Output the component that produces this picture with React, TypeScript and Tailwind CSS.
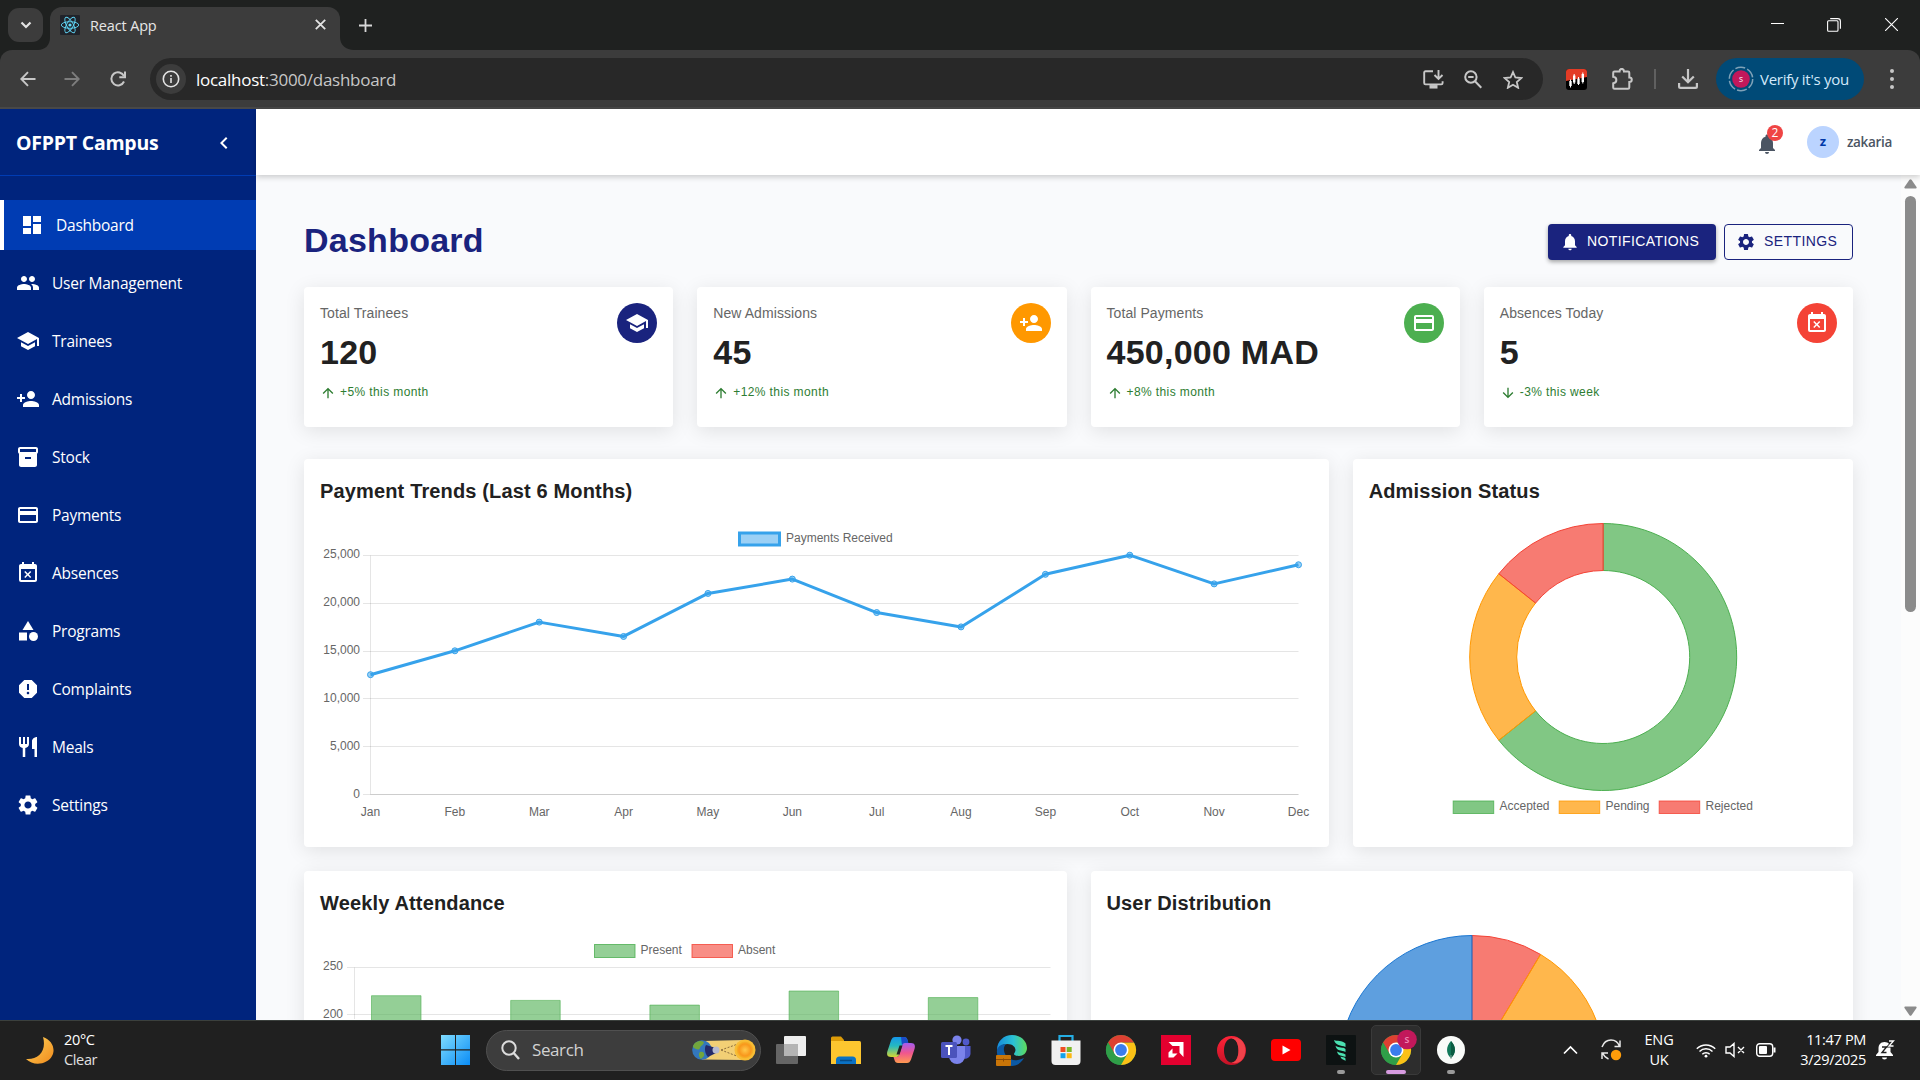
import React from "react";
import {
  MdDashboard, MdPeople, MdSchool, MdPersonAdd, MdInventory2, MdPayment, MdEventBusy, MdCategory,
  MdReport, MdRestaurant, MdSettings, MdNotifications, MdChevronLeft, MdArrowUpward, MdArrowDownward,
} from "react-icons/md";

const ARIAL = "font-['Liberation_Sans',Arial,sans-serif]";

/* ---------- Browser frame ---------- */

function ReactLogo() {
  return (
    <svg width="20" height="20" viewBox="0 0 20 20" className="block">
      <rect width="20" height="20" rx="1" fill="#20232a" />
      <g fill="none" stroke="#61dafb" strokeWidth="0.9">
        <ellipse cx="10" cy="10" rx="8.7" ry="3.3" />
        <ellipse cx="10" cy="10" rx="8.7" ry="3.3" transform="rotate(60 10 10)" />
        <ellipse cx="10" cy="10" rx="8.7" ry="3.3" transform="rotate(120 10 10)" />
      </g>
      <circle cx="10" cy="10" r="1.6" fill="#61dafb" />
    </svg>
  );
}

function TabStrip() {
  return (
    <div className="flex h-[50px] items-start bg-[#1f2120]">
      <div className="ml-[8px] mt-[8px] flex h-[34px] w-[35px] items-center justify-center rounded-[11px] bg-[#3c3c3c]">
        <svg width="12" height="8" viewBox="0 0 12 8" fill="none" stroke="#e3e3e3" strokeWidth="2.2"><path d="M1.5 1.5 6 6l4.500-4.500" /></svg>
      </div>
      <svg width="12" height="50" viewBox="0 0 12 50" className="ml-[-5px]"><path d="M12 38v12H0c7 0 12-5 12-12z" fill="#3c3c3c" /></svg>
      <div className="mt-[7px] flex h-[43px] w-[290px] items-center rounded-t-[12px] bg-[#3c3c3c] pb-[8px]">
        <div className="ml-[10px]"><ReactLogo /></div>
        <span className="ml-[10px] flex-1 pt-[2px] text-[14.500px] tracking-[-0.15px] text-[#e6e6e6]">React App</span>
        <svg width="11" height="11" viewBox="0 0 11 11" className="mr-[14.500px]" stroke="#e3e3e3" strokeWidth="1.8"><path d="M.8.8l9.400 9.400M10.200.8.8 10.200" /></svg>
      </div>
      <svg width="14" height="50" viewBox="0 0 14 50"><path d="M0 37v13h14C6 50 0 45 0 37z" fill="#3c3c3c" /></svg>
      <svg width="13" height="13" viewBox="0 0 13 13" className="ml-[5px] mt-[18.500px]" stroke="#d8d8d8" strokeWidth="1.8"><path d="M6.500 0v13M0 6.500h13" /></svg>
      <div className="flex-1" />
      <svg width="13" height="13" viewBox="0 0 13 13" className="mt-[18px]" stroke="#fff" shapeRendering="crispEdges"><path d="M0 5.500h13" /></svg>
      <svg width="14" height="14" viewBox="0 0 14 14" className="ml-[43px] mt-[18px]" fill="none" stroke="#fff" strokeWidth="1.100">
        <rect x=".6" y="2.800" width="10.400" height="10.400" rx="1" /><path d="M3.200.6h7.500c1.500 0 2.700 1.200 2.700 2.700v7.500" />
      </svg>
      <svg width="13" height="13" viewBox="0 0 13 13" className="ml-[44px] mr-[22px] mt-[18px]" stroke="#fff" strokeWidth="1.100"><path d="M0 0l13 13M13 0 0 13" /></svg>
    </div>
  );
}

function ArrowIcon({ color, flip }: { color: string; flip?: boolean }) {
  return (
    <svg width="16" height="16" viewBox="0 0 16 16" fill="none" stroke={color} strokeWidth="1.900" className={flip ? "rotate-180" : ""}>
      <path d="M15.500 8H1.500M8 1.200 1.300 8 8 14.800" />
    </svg>
  );
}

function Toolbar() {
  return (
    <div className="h-[59px] bg-[#1f2120]">
      <div className="flex h-[59px] items-start rounded-t-[12px] border-b-2 border-[#484848] bg-[#3c3c3c] pt-[8px]">
        <div className="flex h-[42px] w-[150px] items-center pl-[20px]">
          <ArrowIcon color="#c7c7c7" />
          <div className="ml-[28px]"><ArrowIcon color="#7d7d7d" flip /></div>
          <svg width="16" height="16" viewBox="0 0 16 16" className="ml-[29.500px]" fill="none" stroke="#c7c7c7" strokeWidth="2">
            <path d="M14 10.500A6.600 6.600 0 1 1 14 5.200" /><path d="M15 .5v5.800H9.300" />
          </svg>
        </div>
        <div className="flex h-[42px] w-[1393px] items-center rounded-full bg-[#282828] pl-[6px]">
          <div className="flex h-[30px] w-[30px] items-center justify-center rounded-full bg-[#3c3c3c]">
            <svg width="18" height="18" viewBox="0 0 18 18" fill="none" stroke="#e3e3e3" strokeWidth="1.600">
              <circle cx="9" cy="9" r="7.700" /><path d="M9 8v5M9 5v1.700" />
            </svg>
          </div>
          <span className="ml-[10px] flex-1 pt-[1px] text-[17px] tracking-[-0.270px] text-[#c7c7c7]"><span className="text-white">localhost</span>:3000/dashboard</span>
          <svg width="21" height="19" viewBox="0 0 21 19" fill="none" stroke="#c7c7c7" strokeWidth="1.900">
            <path d="M10 1.300H2.500c-.8 0-1.300.5-1.300 1.300v10.500c0 .8.500 1.300 1.300 1.300h15.800c.8 0 1.300-.5 1.300-1.300v-1.800" /><path d="M15.500 0v8.500M11.500 5l4 4 4-4" /><path d="M6.500 16.800h8" strokeWidth="3.500" />
          </svg>
          <svg width="18" height="19" viewBox="0 0 18 19" className="ml-[20px]" fill="none" stroke="#c7c7c7" strokeWidth="2">
            <circle cx="6.900" cy="7" r="5.700" /><path d="M11 11.200l6.300 6.500M4.200 7h5.400" />
          </svg>
          <svg width="20" height="19" viewBox="0 0 24 23" className="ml-[21px] mr-[20px]" fill="none" stroke="#c7c7c7" strokeWidth="2.200">
            <path d="M12 2.500l2.900 6.600 7.100.7-5.400 4.700 1.600 7L12 17.800l-6.200 3.700 1.600-7L2 9.800l7.100-.7z" />
          </svg>
        </div>
        <div className="flex h-[42px] flex-1 items-center">
          <svg width="21" height="21" viewBox="0 0 21 21" className="ml-[23px]">
            <rect width="21" height="21" rx="3" fill="#000" /><path d="M0 12V3a3 3 0 0 1 3-3h15a3 3 0 0 1 3 3v5z" fill="#e33b25" />
            <path d="M4.500 12v5M8.200 6.500v7M12.500 9.500v5.500M16.800 5v8" stroke="#fff" strokeWidth="2.400" /><path d="M4.500 10.500v8M8.200 5v10M12.500 8v8M16.800 3.500v11" stroke="#fff" />
          </svg>
          <svg width="21" height="22" viewBox="0 0 21 22" className="ml-[25px]" fill="none" stroke="#c7c7c7" strokeWidth="2">
            <path d="M2.500 3.500H7.500C7.500 0 12 0 12 3.500h4c.8 0 1.300.5 1.300 1.300V9.500c3.300 0 3.300 4.500 0 4.500v5.500c0 .8-.5 1.300-1.300 1.300H2.500c-.8 0-1.300-.5-1.300-1.300v-4.200c4.200-.5 4.200-6 0-6.500V4.800c0-.8.5-1.300 1.300-1.300z" />
          </svg>
          <div className="ml-[21px] h-[20px] w-[2px] bg-[#606060]" />
          <svg width="20" height="20" viewBox="0 0 20 20" className="ml-[22px]" fill="none" stroke="#c7c7c7" strokeWidth="2.200">
            <path d="M10 0v13M4.200 7.500 10 13.300l5.800-5.800M1.100 14v3.500c0 .8.600 1.400 1.400 1.400h15c.8 0 1.400-.6 1.400-1.400V14" />
          </svg>
          <div className="ml-[18px] flex h-[42px] w-[148px] items-center rounded-full bg-[#004a77]">
            <svg width="26" height="26" viewBox="0 0 26 26" className="ml-[12px]">
              <circle cx="13" cy="13" r="11.700" fill="none" stroke="#7fa2b8" strokeWidth="1.500" strokeDasharray="10 2.250" />
              <circle cx="13" cy="13" r="8.800" fill="#c2185b" />
              <text x="13" y="16" fontSize="8.500" fill="#fff" textAnchor="middle" fontFamily="Open Sans, sans-serif">s</text>
            </svg>
            <span className="ml-[6px] whitespace-nowrap text-[15px] tracking-[-0.270px] text-[#d3e9fb]">Verify it's you</span>
          </div>
          <svg width="4" height="20" viewBox="0 0 4 20" className="ml-[26px]" fill="#c7c7c7"><circle cx="2" cy="2" r="2" /><circle cx="2" cy="10" r="2" /><circle cx="2" cy="18" r="2" /></svg>
        </div>
      </div>
    </div>
  );
}

/* ---------- Application ---------- */

const NAV = [
  { label: "Dashboard", Icon: MdDashboard, active: true },
  { label: "User Management", Icon: MdPeople },
  { label: "Trainees", Icon: MdSchool },
  { label: "Admissions", Icon: MdPersonAdd },
  { label: "Stock", Icon: MdInventory2 },
  { label: "Payments", Icon: MdPayment },
  { label: "Absences", Icon: MdEventBusy },
  { label: "Programs", Icon: MdCategory },
  { label: "Complaints", Icon: MdReport },
  { label: "Meals", Icon: MdRestaurant },
  { label: "Settings", Icon: MdSettings },
];

function Sidebar() {
  return (
    <aside className="flex w-[256px] shrink-0 flex-col bg-[#00247d] text-white">
      <div className="flex h-[67px] items-center justify-between border-b border-[#003cb3] pl-[16px] pr-[20px]">
        <span className="pt-[2px] text-[19.500px] font-bold tracking-[-0.230px]">OFPPT Campus</span>
        <MdChevronLeft size={24} className="mt-[2px]" />
      </div>
      <nav className="mt-[24px] flex flex-col gap-2">
        {NAV.map(({ label, Icon, active }) => (
          <div key={label} className={`flex h-[50px] items-center pl-4 ${active ? "border-l-4 border-white bg-[#003cb3]" : ""}`}>
            <Icon size={24} />
            <span className="ml-3 pt-[2px] text-[15.500px] tracking-[-0.240px]">{label}</span>
          </div>
        ))}
      </nav>
    </aside>
  );
}

function Header() {
  return (
    <header className="relative z-10 flex h-[66px] shrink-0 items-center justify-end bg-white shadow-[0_2px_6px_rgba(0,0,0,0.2)]">
      <div className="relative mr-[28px] mt-[3px]">
        <MdNotifications size={24} color="#4b5563" className="block" />
        <span className="absolute left-[12px] top-[-7px] flex h-[16px] w-[16px] items-center justify-center rounded-full bg-[#ef4444] text-[12px] leading-none text-white">2</span>
      </div>
      <div className="flex h-[32px] w-[32px] items-center justify-center rounded-full bg-[#bbd4ff] text-[13px] font-bold text-[#0038a8]">z</div>
      <span className="ml-2 mr-[28px] text-[13.500px] font-semibold tracking-[-0.320px] text-[#4b5563]">zakaria</span>
    </header>
  );
}

const STATS = [
  { label: "Total Trainees", value: "120", trend: "+5% this month", up: true, Icon: MdSchool, bg: "bg-[#1a237e]" },
  { label: "New Admissions", value: "45", trend: "+12% this month", up: true, Icon: MdPersonAdd, bg: "bg-[#ff9800]" },
  { label: "Total Payments", value: "450,000 MAD", trend: "+8% this month", up: true, Icon: MdPayment, bg: "bg-[#4caf50]" },
  { label: "Absences Today", value: "5", trend: "-3% this week", up: false, Icon: MdEventBusy, bg: "bg-[#f44336]" },
];

function StatCard({ label, value, trend, up, Icon, bg }: (typeof STATS)[number]) {
  return (
    <div className="flex h-[140px] justify-between rounded bg-white p-4 shadow-[0_4px_20px_rgba(0,0,0,0.1)]">
      <div>
        <div className="text-[14px] leading-[20px] tracking-[0.080px] text-[#666]">{label}</div>
        <div className="mt-[8px] text-[34px] font-bold leading-[42px] tracking-[0.25px] text-[#212121]">{value}</div>
        <div className="mt-[9px] flex items-center gap-1 text-[12px] leading-[20px] tracking-[0.4px] text-[#2e7d32]">
          {up ? <MdArrowUpward size={16} className="mt-[1px]" /> : <MdArrowDownward size={16} className="mt-[1px]" />}
          {trend}
        </div>
      </div>
      <div className={`flex h-10 w-10 items-center justify-center rounded-full text-white ${bg}`}><Icon size={24} /></div>
    </div>
  );
}

function Panel({ title, className, children }: { title: string; className: string; children: React.ReactNode }) {
  return (
    <section className={`rounded bg-white p-4 shadow-[0_4px_20px_rgba(0,0,0,0.1)] ${className}`}>
      <h2 className="text-[20px] font-bold leading-[32px] tracking-[0.15px] text-[#212121]">{title}</h2>
      {children}
    </section>
  );
}

const MONTHS = ["Jan", "Feb", "Mar", "Apr", "May", "Jun", "Jul", "Aug", "Sep", "Oct", "Nov", "Dec"];
const PAYMENTS = [12500, 15000, 18000, 16500, 21000, 22500, 19000, 17500, 23000, 25000, 22000, 24000];
const GRID = "rgba(0,0,0,0.1)";

function PaymentChart() {
  const left = 50.5, right = 978.5, top = 48.5, bottom = 287.500;
  const px = (i: number) => left + (i * (right - left)) / 11;
  const py = (v: number) => bottom - (v / 25000) * (bottom - top);
  return (
    <svg width="993" height="324" viewBox="0 0 993 324" fontSize="12" fill="#666" className="block">
      <rect x="419.500" y="26" width="40" height="12" fill="#9bd0f5" stroke="#36a2eb" strokeWidth="3" />
      <text x="466" y="35">Payments Received</text>
      {[0, 5000, 10000, 15000, 20000, 25000].map((v) => {
        const y = Math.round(py(v) - 0.5) + 0.5;
        return (
          <g key={v}>
            <path d={`M43 ${y}H${right}`} stroke={GRID} />
            <text x="40" y={y + (v > 10000 ? 2 : 3)} textAnchor="end">{v.toLocaleString("en-US")}</text>
          </g>
        );
      })}
      <path d={`M${left} ${top}V${bottom}M${left} ${bottom}H${right}`} stroke={GRID} />
      <polyline points={PAYMENTS.map((v, i) => `${px(i)},${py(v) - 0.3}`).join(" ")} fill="none" stroke="#36a2eb" strokeWidth="3" strokeLinejoin="round" />
      {PAYMENTS.map((v, i) => <circle key={i} cx={px(i)} cy={py(v) - 0.3} r="3" fill="#36a2eb" fillOpacity="0.5" stroke="#36a2eb" />)}
      {MONTHS.map((m, i) => <text key={m} x={px(i)} y="309" textAnchor="middle">{m}</text>)}
    </svg>
  );
}

function slice(cx: number, cy: number, r: number, inner: number, from: number, to: number) {
  const pt = (rad: number, deg: number) => {
    const a = ((deg - 90) * Math.PI) / 180;
    return `${(cx + rad * Math.cos(a)).toFixed(2)} ${(cy + rad * Math.sin(a)).toFixed(2)}`;
  };
  const large = to - from > 180 ? 1 : 0;
  const back = inner > 0 ? `L${pt(inner, to)}A${inner} ${inner} 0 ${large} 0 ${pt(inner, from)}` : `L${cx} ${cy}`;
  return `M${pt(r, from)}A${r} ${r} 0 ${large} 1 ${pt(r, to)}${back}Z`;
}

function Slice({ d, color }: { d: string; color: string }) {
  return <path d={d} fill={color} fillOpacity="0.7" stroke={color} />;
}

function AdmissionChart() {
  const keys = [
    { label: "Accepted", color: "#4caf50", x: 84.2 },
    { label: "Pending", color: "#ff9800", x: 190.2 },
    { label: "Rejected", color: "#f44336", x: 290.2 },
  ];
  return (
    <svg width="468" height="324" viewBox="0 0 468 324" fontSize="12" className="block">
      <Slice d={slice(234.2, 150, 133.5, 86.5, 0, 231.43)} color="#4caf50" />
      <Slice d={slice(234.2, 150, 133.5, 86.5, 231.43, 308.57)} color="#ff9800" />
      <Slice d={slice(234.2, 150, 133.5, 86.5, 308.57, 360)} color="#f44336" />
      {keys.map((k) => (
        <g key={k.label}>
          <rect x={k.x} y="294" width="40.500" height="12.500" fill={k.color} fillOpacity="0.7" stroke={k.color} strokeOpacity="0.8" />
          <text x={k.x + 46.3} y="303" fill="#666">{k.label}</text>
        </g>
      ))}
    </svg>
  );
}

function AttendanceChart() {
  const left = 34.5, right = 730.500, top = 48.5, step = 47;
  const base = 100;
  const bars = [220, 215, 210, 225, 218];
  return (
    <svg width="731" height="101" viewBox="0 0 731 101" fontSize="12" fill="#666" className="block">
      <rect x="274.500" y="25.500" width="40.500" height="13" fill="#4caf50" fillOpacity="0.600" stroke="#4caf50" strokeOpacity="0.8" />
      <text x="320.500" y="35">Present</text>
      <rect x="372" y="25.500" width="40.500" height="13" fill="#f44336" fillOpacity="0.600" stroke="#f44336" strokeOpacity="0.8" />
      <text x="418" y="35">Absent</text>
      {[250, 200].map((v, i) => (
        <g key={v}>
          <path d={`M27 ${top + i * step}H${right}`} stroke={GRID} />
          <text x="23" y={top + i * step + 2.500 + i * 0.5} textAnchor="end">{v}</text>
        </g>
      ))}
      <path d={`M${left} ${top}V${base}`} stroke={GRID} />
      {bars.map((v, i) => {
        const x = left + 17 + i * 139.2;
        const y = top + ((250 - v) * step) / 50;
        return <path key={i} d={`M${x} ${base + 5}V${y}h49.500V${base + 5}`} fill="#4caf50" fillOpacity="0.600" stroke="#4caf50" strokeOpacity="0.6" />;
      })}
    </svg>
  );
}

function UserChart() {
  return (
    <svg width="731" height="324" viewBox="0 0 731 324" className="block">
      <Slice d={slice(365, 150, 133.5, 0, 0, 30.9)} color="#f44336" />
      <Slice d={slice(365, 150, 133.5, 0, 30.9, 120)} color="#ff9800" />
      <Slice d={slice(365, 150, 133.5, 0, 120, 360)} color="#1976d2" />
    </svg>
  );
}

function Content() {
  return (
    <main className={`min-h-0 flex-1 overflow-hidden bg-[#f9fafc] px-[48px] pt-[48px] ${ARIAL}`}>
      <div className="flex h-[36.500px] items-center justify-between">
        <h1 className="mt-[-3px] text-[34px] font-bold leading-[42px] tracking-[0.25px] text-[#1a237e]">Dashboard</h1>
        <div className="mt-[1px] flex gap-2 text-[14px] tracking-[0.4px]">
          <div className="flex h-[36px] w-[168px] items-center rounded bg-[#1a237e] pl-[12px] text-white shadow-[0_2px_4px_rgba(0,0,0,0.35)]">
            <MdNotifications size={20} /><span className="ml-[7px]">NOTIFICATIONS</span>
          </div>
          <div className="flex h-[36px] w-[129px] items-center rounded border border-[#1a237e] pl-[11px] text-[#1a237e]">
            <MdSettings size={20} /><span className="ml-2">SETTINGS</span>
          </div>
        </div>
      </div>
      <div className="mt-[27.500px] grid grid-cols-4 gap-6">
        {STATS.map((s) => <StatCard key={s.label} {...s} />)}
      </div>
      <div className="mt-8 grid grid-cols-3 gap-6">
        <Panel title="Payment Trends (Last 6 Months)" className="col-span-2 h-[388px]"><PaymentChart /></Panel>
        <Panel title="Admission Status" className="h-[388px]"><AdmissionChart /></Panel>
      </div>
      <div className="mt-6 grid grid-cols-2 gap-6">
        <Panel title="Weekly Attendance" className="h-[388px]"><AttendanceChart /></Panel>
        <Panel title="User Distribution" className="h-[388px]"><UserChart /></Panel>
      </div>
    </main>
  );
}

function Scrollbar() {
  return (
    <div className="flex w-[19px] shrink-0 flex-col items-center bg-[#fcfcfc]">
      <svg width="13" height="10" viewBox="0 0 13 10" className="mt-[4px]" fill="#8b8b8b"><path d="M5.500.8q1-1.200 2 0l5 7.200q.6 1.500-.8 1.500H1.300Q0 9.500.500 8z" /></svg>
      <div className="mt-[7px] h-[416px] w-[11px] rounded-full bg-[#8b8b8b]" />
      <div className="flex-1" />
      <svg width="13" height="10" viewBox="0 0 13 10" className="mb-[4px] rotate-180" fill="#8b8b8b"><path d="M5.500.8q1-1.200 2 0l5 7.200q.6 1.500-.8 1.500H1.300Q0 9.500.500 8z" /></svg>
    </div>
  );
}

/* ---------- Taskbar ---------- */

function ChromeLogo({ badge }: { badge?: boolean }) {
  return (
    <svg width="30" height="30" viewBox="0 0 30 30" overflow="visible">
      <circle cx="15" cy="15" r="15" fill="#2f9e48" />
      <path d="M15 7.500H28A15 15 0 0 1 15 30l6.500-11.200z" fill="#fbc116" />
      <path d="M2 7.500A15 15 0 0 1 28 7.500H15L8.500 18.700z" fill="#dd4032" />
      <path d="M2 7.500 8.500 18.700 15 22V30A15 15 0 0 1 2 7.500z" fill="#2f9e48" />
      <circle cx="15" cy="15" r="7.500" fill="#fff" /><circle cx="15" cy="15" r="5.900" fill="#3b7ded" />
      {badge && <><circle cx="26" cy="4.500" r="9.800" fill="#c2185b" /><text x="26" y="8" fontSize="10" fontWeight="600" fill="#ee86b2" textAnchor="middle">s</text></>}
    </svg>
  );
}

function SearchArt() {
  return (
    <svg width="64" height="24" viewBox="0 0 64 24">
      <defs><radialGradient id="sun"><stop offset="0" stopColor="#ffc94a" /><stop offset=".7" stopColor="#f9971c" /><stop offset="1" stopColor="#f5b62b" /></radialGradient></defs>
      <path d="M10 3 52 2v20L10 21.500z" fill="#f2cf75" />
      <circle cx="10" cy="12" r="9.800" fill="#3377bd" />
      <path d="M3 5c4-3 7-2 9-1-1 4-3 3-4 6S3 11 1 9c0-2 1-3 2-4zm5 9c3-1 5 1 4 4l-3 3c-2-2-3-5-1-7z" fill="#72a63d" />
      <path d="M14 7l10 3v5l-8 4c-3-3-4-9-2-12z" fill="#252b69" /><circle cx="24" cy="12" r="3.500" fill="#b8bbd0" />
      <path d="M29 12 46 6M29 12 46 18.500" stroke="#8a6c3c" strokeDasharray="2 1.500" />
      <circle cx="53" cy="12" r="10.500" fill="#f8bd35" /><circle cx="53" cy="12" r="8.500" fill="url(#sun)" />
    </svg>
  );
}

function AppSlot({ children, active, running }: { children: React.ReactNode; active?: boolean; running?: boolean }) {
  return (
    <div className={`relative mr-[5px] flex h-[50px] w-[50px] items-center justify-center rounded-[5px] ${active ? "border border-[#3a3a3a] bg-[#2d2d2d]" : ""}`}>
      {children}
      {active && <span className="absolute bottom-0 h-[4px] w-[20px] rounded-full bg-[#d79be0]" />}
      {running && <span className="absolute bottom-[1px] h-[4px] w-[8px] rounded-full bg-[#9a9a9a]" />}
    </div>
  );
}

function AppIcons() {
  return (
    <>
      <AppSlot>
        <svg width="30" height="28" viewBox="0 0 30 28"><rect x="8" width="22" height="20" rx="1" fill="#eee" /><rect y="8" width="22" height="20" rx="1" fill="#656565" /><rect x="8" y="8" width="14" height="12" fill="#b4b4b4" /></svg>
      </AppSlot>
      <AppSlot>
        <svg width="30" height="28" viewBox="0 0 30 28">
          <path d="M0 2q0-1.500 1.500-1.500H10l3 3.500v6H0z" fill="#dd9c08" /><path d="M0 5h28.500Q30 5 30 6.500V28H0z" fill="#fdc62f" />
          <path d="M5 28v-4q0-3.500 3.500-3.500h13Q25 20.500 25 24v4z" fill="#0b72c4" /><path d="M9 24.500h12" stroke="#064b86" strokeWidth="1.500" />
        </svg>
      </AppSlot>
      <AppSlot>
        <svg width="30" height="28" viewBox="0 0 30 28">
          <defs>
            <linearGradient id="cpA" x1="0" y1="0" x2="0" y2="1"><stop offset="0" stopColor="#1597ea" /><stop offset=".45" stopColor="#25b9c0" /><stop offset="1" stopColor="#d5d631" /></linearGradient>
            <linearGradient id="cpB" x1="0" y1="0" x2="0" y2="1"><stop offset="0" stopColor="#a45cf0" /><stop offset=".5" stopColor="#f0568e" /><stop offset="1" stopColor="#ff9a50" /></linearGradient>
          </defs>
          <path d="M9 1h9c2 0 3 1 3.500 3L22 7h-2c-2 0-3 1-3.500 3l-3 8c-.7 2.500-2 3-4 3H5c-4 0-4.500-3-3.500-6L5 4.500C6 2 7 1 9 1z" fill="url(#cpA)" />
          <path d="M15 1h3c2 0 3 1 3.500 3L22.500 7h-3c-2 0-3 1-3.500 3z" fill="#1b4cc8" />
          <path d="M21 27h-9c-2 0-3-1-3.500-3L7.500 21H10c2 0 3-1 3.500-3L16 10c.7-2.500 2-3 4-3h5c4 0 4.500 3 3.500 6L25 23.500c-1 2.500-2 3.500-4 3.500z" fill="url(#cpB)" />
          <path d="M13.500 9.500h3L13.500 18.500h-3z" fill="#202020" />
        </svg>
      </AppSlot>
      <AppSlot>
        <svg width="30" height="30" viewBox="0 0 30 30">
          <circle cx="25" cy="7" r="3.400" fill="#5059c9" /><path d="M20 11h9.500v8a5.500 5.500 0 0 1-9.500 3z" fill="#5059c9" />
          <circle cx="16" cy="5" r="4.600" fill="#7b83eb" /><path d="M8 11h16v10a8 8 0 0 1-16 0z" fill="#7b83eb" />
          <rect y="7" width="16" height="16" rx="1.500" fill="#4b53bc" /><path d="M4.500 11h7M8 11v9" stroke="#fff" strokeWidth="2" />
        </svg>
      </AppSlot>
      <AppSlot>
        <svg width="31" height="31" viewBox="0 0 31 31">
          <defs><linearGradient id="edge"><stop offset="0" stopColor="#168bdc" /><stop offset=".55" stopColor="#2bc2d4" /><stop offset="1" stopColor="#5fdc5a" /></linearGradient></defs>
          <path d="M1 15C1 6 8 0 16 0c9 0 15 6 15 13 0 5-4 8-8 8-3 0-5-1-5-2s1.500-2 1.500-4c0-3-3-6-8-6C6 9 1 12 1 19z" fill="url(#edge)" />
          <path d="M1 15c1-4 5-6 9-6-3 3-3 8 1 13 4 4 11 4 17 1-3 5-7 8-12 8C7 31 0 24 1 15z" fill="#0c59a4" />
          <rect y="20" width="15" height="11" rx="1" fill="#c97508" /><path d="M0 24.500h15M7.500 23.500v3" stroke="#8b4a05" />
        </svg>
      </AppSlot>
      <AppSlot>
        <svg width="30" height="30" viewBox="0 0 30 30">
          <path d="M8.500 7V1h13v6" fill="none" stroke="#25aee4" strokeWidth="2.200" /><path d="M.5 5.500h29V26q0 4-4 4h-21q-4 0-4-4z" fill="#f1f1f1" />
          <path d="M9.500 12h5v5h-5z" fill="#f04e23" /><path d="M15.700 12h5v5h-5z" fill="#7ab829" /><path d="M9.500 18.200h5v5h-5z" fill="#13a2ec" /><path d="M15.700 18.200h5v5h-5z" fill="#fcb813" />
        </svg>
      </AppSlot>
      <AppSlot><ChromeLogo /></AppSlot>
      <AppSlot>
        <svg width="30" height="30" viewBox="0 0 30 30"><rect width="30" height="30" fill="#e4002f" /><path d="M7.500 7H22.500v15l-4-4.200V11H11.500zM11.500 13.500V18.500H16.500L12.500 22.500H7.500V17.500z" fill="#fff" /></svg>
      </AppSlot>
      <AppSlot>
        <svg width="29" height="29" viewBox="0 0 29 29">
          <defs><linearGradient id="op" x1="0" y1="0" x2="0" y2="1"><stop offset="0" stopColor="#ff2338" /><stop offset="1" stopColor="#c41226" /></linearGradient></defs>
          <path fillRule="evenodd" d="M14.500 0a14.500 14.500 0 1 0 0 29 14.500 14.500 0 1 0 0-29zm0 2.500c4.500 0 7 5.500 7 12s-2.500 12-7 12-7.500-5.500-7.500-12 3-12 7.500-12z" fill="url(#op)" />
          <path d="M14.500 2.500c4.500 0 7 5.500 7 12s-2.500 12-7 12c3 1.500 7 .5 10-2 5-5 5-15 0-20-3-2.500-7-3.500-10-2z" fill="#f1424a" />
        </svg>
      </AppSlot>
      <AppSlot>
        <svg width="30" height="22" viewBox="0 0 30 22"><rect width="30" height="22" rx="4" fill="#f00" /><path d="M11.500 6.500 19.500 11l-8 4.500z" fill="#fff" /></svg>
      </AppSlot>
      <AppSlot running>
        <svg width="30" height="30" viewBox="0 0 30 30"><rect width="30" height="30" rx="1" fill="#0d1212" /><path d="M8 5c3 1.500 8 0 11.500 3.500V12C15 10 9.500 11 8 5zm1.500 5.800c3.500 2.500 7.500 1 10 3.200v3c-4-2-9-.5-10-6.200zm1.500 5.800c3 2 6 1 8.500 3v2.500c-3.500-1.600-7.500-.6-8.500-5.500zm3.500 5c2 .8 3.500.4 5 1.900v2.500c-2-1.700-4.500-1.400-5-4.400z" fill="#4be0b0" /></svg>
      </AppSlot>
      <AppSlot active><ChromeLogo badge /></AppSlot>
      <AppSlot running>
        <svg width="28" height="28" viewBox="0 0 28 28"><circle cx="14" cy="14" r="14" fill="#f9fbf9" /><path d="M14 5c5.500 5.500 5 13-.2 17C9 18 8.500 10.500 14 5z" fill="#13795b" /><path d="M14 5c5.500 5.500 5 13 0 17z" fill="#0b5c42" /><path d="M14 19v4" stroke="#8aa89c" /></svg>
      </AppSlot>
    </>
  );
}

function Taskbar() {
  return (
    <div className="flex h-[60px] items-center border-t border-[#3b403d] bg-[#202020] pb-[1px] text-white">
      <div className="flex w-[441px] items-center pl-[26px]">
        <svg width="28" height="29" viewBox="0 0 28 29">
          <defs><linearGradient id="moon" x1="0" y1="0" x2="1" y2="1"><stop offset="0" stopColor="#ffd45a" /><stop offset="1" stopColor="#f08a1c" /></linearGradient></defs>
          <path d="M17 1c9 3 13 12 9 19-4 8-18 11-26 3 12 1 21-8 17-22z" fill="url(#moon)" />
        </svg>
        <div className="mt-[-1px] ml-[10px] text-[14.500px] leading-[20px] tracking-[-0.350px]"><div>20°C</div><div className="text-[#e0e0e0]">Clear</div></div>
      </div>
      <svg width="29" height="30" viewBox="0 0 29 30">
        <defs><linearGradient id="win" x1="0" y1="0" x2="1" y2="1"><stop offset="0" stopColor="#7fdcff" /><stop offset="1" stopColor="#0a8cf5" /></linearGradient></defs>
        <path d="M0 0h14v14.300H0zM15 0h14v14.300H15zM0 15.500h14V30H0zM15 15.500h14V30H15z" fill="url(#win)" />
      </svg>
      <div className="ml-[16px] mr-[5px] flex h-[41px] w-[275px] items-center rounded-full border border-[#505050] bg-[#3d3d3d] pl-[14px] pr-[4px]">
        <svg width="19" height="20" viewBox="0 0 19 20" fill="none" stroke="#dcdcdc" strokeWidth="2"><circle cx="8" cy="8" r="6.700" /><path d="M12.700 13l5.300 6" strokeWidth="2.400" /></svg>
        <span className="ml-[12px] flex-1 text-[17px] tracking-[-0.400px] text-[#d2d2d2]">Search</span>
        <SearchArt />
      </div>
      <AppIcons />
      <div className="flex-1" />
      <svg width="15" height="10" viewBox="0 0 15 10" fill="none" stroke="#fff" strokeWidth="1.700"><path d="M1 8.500 7.500 2 14 8.500" /></svg>
      <svg width="21" height="22" viewBox="0 0 21 22" className="ml-[23px]" fill="none" stroke="#e8e8e8" strokeWidth="1.500">
        <path d="M1 8C3 2.500 7 1 10 1c4 0 7 2 8.500 6.500M19 1.500v6h-5.500M7.500 20C5 19 3 17 1.500 14M1 20v-6h6" /><circle cx="15" cy="16" r="5.200" fill="#ff9d0a" stroke="none" />
      </svg>
      <div className="mt-[-1px] ml-[14px] w-[46px] text-center text-[14.500px] leading-[20px] tracking-[-0.150px]"><div>ENG</div><div>UK</div></div>
      <svg width="20" height="15" viewBox="0 0 20 15" className="ml-[14px]" fill="none" stroke="#fff" strokeWidth="1.500">
        <path d="M.8 5.800a13 13 0 0 1 18.400 0M3.500 8.500a9.200 9.200 0 0 1 13 0M6.300 11.200a5.200 5.200 0 0 1 7.400 0" /><circle cx="10" cy="13.200" r="1.400" fill="#fff" stroke="none" />
      </svg>
      <svg width="20" height="16" viewBox="0 0 20 16" className="ml-[9px]" fill="none" stroke="#fff" strokeWidth="1.400"><path d="M9 1.500 5 5H1v6h4l4 3.500zM13 5l6 6M19 5l-6 6" /></svg>
      <svg width="20" height="14" viewBox="0 0 20 14" className="ml-[11px]"><rect x=".7" y=".7" width="16" height="12.600" rx="3" fill="none" stroke="#fff" strokeWidth="1.400" /><rect x="3" y="3" width="8" height="8" rx="1" fill="#fff" /><path d="M18.500 4.500v5" stroke="#fff" strokeWidth="2" /></svg>
      <div className="mt-[-1px] ml-[18px] w-[72px] whitespace-nowrap text-right text-[14.500px] leading-[20px] tracking-[-0.330px]"><div>11:47 PM</div><div>3/29/2025</div></div>
      <svg width="19" height="20" viewBox="0 0 19 20" className="ml-[10px] mr-[25px]" fill="#fff">
        <path d="M8.500 2C4.500 2 2.500 5 2.500 8v4L0 15v1h17v-1l-2.500-3V8c0-3-2-6-6-6zM6 17.500h5a2.500 2 0 0 1-5 0z" /><path d="M6 7h4.500L6 12.500h4.500" stroke="#202020" strokeWidth="1.400" fill="none" /><path d="M13 1h4.500L13 6h4.500" stroke="#202020" strokeWidth="3" fill="none" /><path d="M13 1h4.500L13 6h4.500" stroke="#fff" strokeWidth="1.300" fill="none" />
      </svg>
    </div>
  );
}

export default function App() {
  return (
    <div className="flex h-[1080px] w-[1920px] flex-col overflow-hidden font-['Open_Sans','Noto_Sans',sans-serif]">
      <TabStrip />
      <Toolbar />
      <div className="flex min-h-0 flex-1">
        <Sidebar />
        <div className="flex min-w-0 flex-1 flex-col">
          <Header />
          <div className="flex min-h-0 flex-1"><Content /><Scrollbar /></div>
        </div>
      </div>
      <Taskbar />
    </div>
  );
}
